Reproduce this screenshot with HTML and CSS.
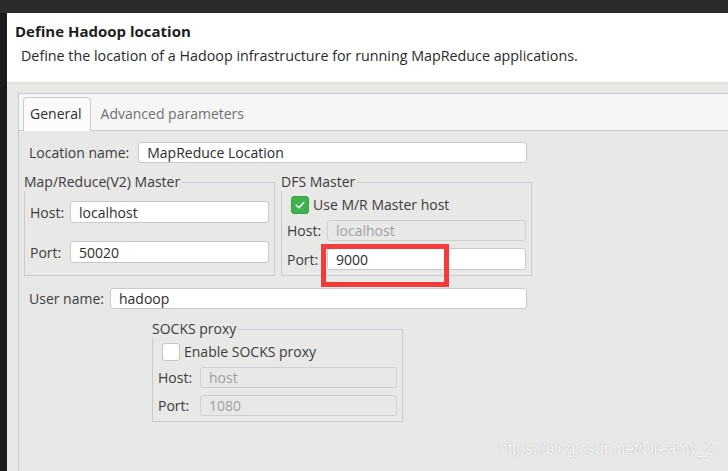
FILE: index.html
```html
<!DOCTYPE html>
<html>
<head>
    <link rel="stylesheet" href="styles.css">
</head>
<body>
    <div class="topbar"></div>
    <div class="screen">
        <div class="strip"></div>
        <div class="dialog">
            <div class="header">
                <h1 class="title">Define Hadoop location</h1>
                <p class="subtitle">Define the location of a Hadoop infrastructure for running MapReduce applications.</p>
            </div>
            <div class="content">
                <div class="notebook">
                    <div class="tabs">
                        <div class="tab active">General</div>
                        <div class="tab">Advanced parameters</div>
                    </div>
                    <div class="page">
                        <div class="form">
                            <div class="row row-location">
                                <label class="label">Location name:</label>
                                <input class="entry" type="text" value="MapReduce Location">
                            </div>

                            <div class="groups">
                                <!-- Map/Reduce master -->
                                <fieldset class="group">
                                    <legend>Map/Reduce(V2) Master</legend>
                                    <div class="row row-mr-host">
                                        <label class="label">Host:</label>
                                        <input class="entry" type="text" value="localhost">
                                    </div>
                                    <div class="row row-mr-port">
                                        <label class="label">Port:</label>
                                        <input class="entry" type="text" value="50020">
                                    </div>
                                </fieldset>

                                <!-- DFS master -->
                                <fieldset class="group">
                                    <legend>DFS Master</legend>
                                    <div class="check-row dfs-check">
                                        <span class="check checked">
                                            <svg width="12" height="12" viewBox="0 0 12 12"><path d="M2.2 6.3 L4.8 8.8 L9.8 3.4" fill="none" stroke="#fff" stroke-width="1.4" stroke-linecap="round" stroke-linejoin="round"/></svg>
                                        </span>
                                        <span>Use M/R Master host</span>
                                    </div>
                                    <div class="row row-dfs-host">
                                        <label class="label">Host:</label>
                                        <input class="entry" type="text" value="localhost" disabled>
                                    </div>
                                    <div class="row row-dfs-port">
                                        <label class="label">Port:</label>
                                        <div class="entry-wrap">
                                            <input class="entry" type="text" value="9000">
                                            <div class="highlight"></div>
                                        </div>
                                    </div>
                                </fieldset>
                            </div>

                            <div class="row row-user">
                                <label class="label">User name:</label>
                                <input class="entry" type="text" value="hadoop">
                            </div>

                            <fieldset class="group socks">
                                <legend>SOCKS proxy</legend>
                                <div class="check-row socks-check">
                                    <span class="check"></span>
                                    <span>Enable SOCKS proxy</span>
                                </div>
                                <div class="row row-socks-host">
                                    <label class="label">Host:</label>
                                    <input class="entry" type="text" value="host" disabled>
                                </div>
                                <div class="row row-socks-port">
                                    <label class="label">Port:</label>
                                    <input class="entry" type="text" value="1080" disabled>
                                </div>
                            </fieldset>
                        </div>
                    </div>
                </div>
            </div>
        </div>
    </div>
    <div class="watermark">https://blog.csdn.net/Dreamy_Z</div>
</body>
</html>
```

FILE: styles.css
```css
body {
    margin: 0;
    background: #1b1b1b;
    font-family: "Open Sans", "Noto Sans", sans-serif;
    font-size: 14px;
    color: #3c3c3c;
    overflow: hidden;
    height: 471px;
}

.topbar {
    height: 13px;
    background: #2b2b2b;
}

.screen {
    display: flex;
    height: 458px;
}

.strip {
    width: 7px;
    flex-shrink: 0;
    background: #1b1b1b;
}

.dialog {
    flex: 1;
    display: flex;
    flex-direction: column;
    background: #e8e8e7;
    overflow: hidden;
}

.header {
    flex-shrink: 0;
    background: #ffffff;
    height: 70px;
    border-bottom: 1px solid #dcdcdc;
    box-sizing: border-box;
    padding: 9px 0 0 8px;
}

.title {
    margin: 0;
    font-size: 15px;
    font-weight: bold;
    color: #1e1e1e;
    line-height: 18px;
}

.subtitle {
    margin: 6px 0 0 6px;
    font-size: 14.3px;
    color: #2a2a2a;
    line-height: 20px;
}

.content {
    flex: 1;
    min-height: 0;
    padding: 10px 0 0 11px;
}

.notebook {
    width: 760px;
    height: 400px;
    border: 1px solid #c8ccd0;
    box-sizing: border-box;
}

.tabs {
    display: flex;
    align-items: flex-end;
    height: 37px;
    padding-left: 4px;
    background: #f6f6f5;
    border-bottom: 1px solid #c8ccd0;
    box-sizing: border-box;
}

.tab {
    height: 33px;
    line-height: 32px;
    padding: 0 7px 0 6px;
    color: #707070;
    box-sizing: border-box;
    margin-bottom: -1px;
}

.tab.active {
    background: #fbfbfb;
    border: 1px solid #c8ccd0;
    border-bottom: none;
    border-radius: 4px 4px 0 0;
    color: #2e2e2e;
    padding: 0 8px 0 6px;
    height: 34px;
    margin-right: 4px;
}

.page {
    padding: 11px 0 0 5px;
}

.form {
    width: 508px;
}

.row {
    display: flex;
    align-items: center;
}

.label {
    white-space: nowrap;
    margin-right: 6px;
}

.entry {
    flex: 1;
    min-width: 0;
    height: 22px;
    box-sizing: border-box;
    border: 1px solid #c9c9c9;
    border-radius: 3px;
    background: #ffffff;
    font-family: inherit;
    font-size: 14px;
    color: #2c2c2c;
    padding: 0 8px;
    margin: 0;
    outline: none;
}

.entry:disabled {
    background: #e8e8e7;
    border-color: #d0d0d0;
    color: #a0a0a0;
}

.row-location {
    padding: 0 5px;
}

.row-location .label {
    margin-right: 9px;
}

.row-location .entry {
    height: 21px;
}

.groups {
    display: flex;
    gap: 6px;
    margin-top: 10px;
}

.group {
    margin: 0;
    padding: 0 5px 5px 5px;
    min-width: 0;
    border: 1px solid #c8ccd0;
    width: 251px;
    box-sizing: border-box;
}

.group legend {
    padding: 0 2px 0 0;
    margin-left: -6px;
    line-height: 18px;
    color: #3c3c3c;
}

.row-mr-host {
    margin-top: 10px;
}

.row-mr-port {
    margin-top: 18px;
}

.row-mr-host .label,
.row-mr-port .label {
    width: 33px;
    margin-right: 7px;
}

.check-row {
    display: flex;
    align-items: center;
    gap: 4px;
}

.check {
    width: 18px;
    height: 18px;
    box-sizing: border-box;
    border-radius: 3px;
    border: 1px solid #c4c4c4;
    background: #ffffff;
    display: flex;
    align-items: center;
    justify-content: center;
}

.check.checked {
    background: #3fb24f;
    border-color: #37a346;
}

.dfs-check {
    margin: 4px 0 0 4px;
}

.row-dfs-host {
    margin-top: 6px;
}

.row-dfs-host .entry {
    height: 21px;
}

.row-dfs-port {
    margin-top: 7px;
}

.row-dfs-host .label,
.row-dfs-port .label {
    width: 35px;
    margin-right: 5px;
}

.entry-wrap {
    flex: 1;
    position: relative;
    display: flex;
}

.highlight {
    position: absolute;
    left: -6px;
    top: -4px;
    width: 128px;
    height: 43px;
    border: 5px solid #f33b3b;
    box-sizing: border-box;
}

.row-user {
    margin-top: 12px;
    padding: 0 5px;
}

.row-user .entry {
    height: 21px;
}

.socks {
    margin: 11px 0 0 128px;
}

.socks-check {
    margin: 4px 0 0 4px;
}

.row-socks-host {
    margin-top: 6px;
}

.row-socks-port {
    margin-top: 7px;
}

.row-socks-host .label,
.row-socks-port .label {
    width: 35px;
    margin-right: 7px;
}

.socks .entry {
    height: 21px;
}

.watermark {
    position: absolute;
    left: 499px;
    top: 440px;
    font-family: "Liberation Sans", Arial, sans-serif;
    font-size: 16px;
    letter-spacing: -0.2px;
    color: #fbfbfb;
    text-shadow: 0 0 1px rgba(0, 0, 0, 0.35);
}
```
